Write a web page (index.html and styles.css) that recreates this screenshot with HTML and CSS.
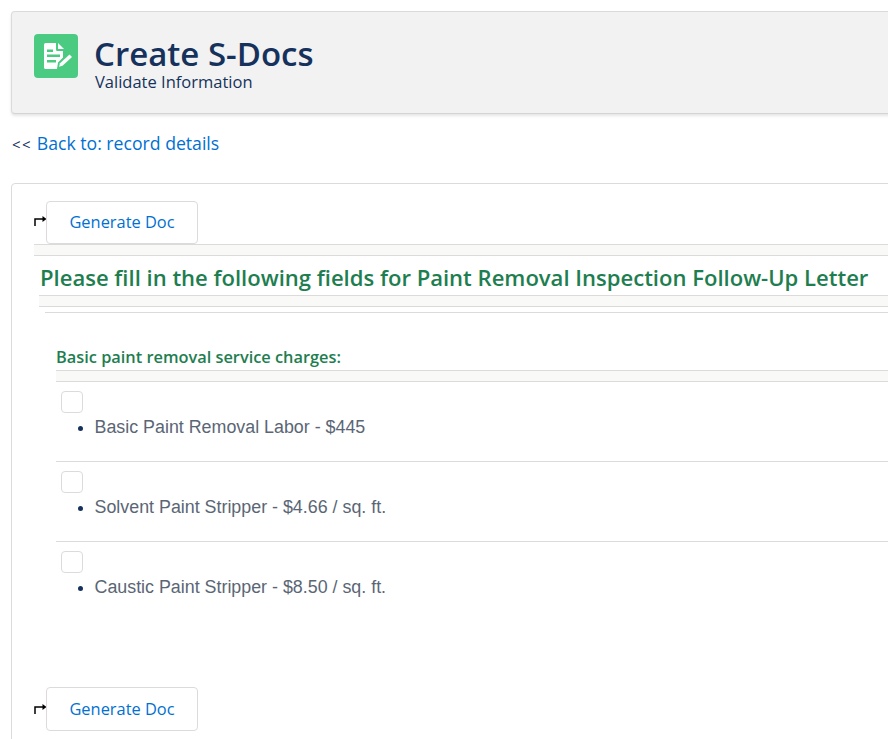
FILE: index.html
```html
<!DOCTYPE html>
<html lang="en">
<head>
<meta charset="utf-8">
<title>Create S-Docs</title>
<link rel="stylesheet" href="styles.css">
</head>
<body>
<div class="page">
  <header class="page-header">
    <div class="app-icon">
      <svg width="44" height="44" viewBox="0 0 44 44">
        <path fill="#fff" d="M11.500 9H22v6.500c0 1 .8 1.500 1.500 1.500H29v6.500l-5 5-1 6.500H11.500c-.8 0-1.500-.7-1.500-1.500v-22.500C10 9.700 10.700 9 11.500 9z"/>
        <path fill="#fff" d="M24 9l6 6h-6z"/>
        <path fill="#4bca81" d="M13 15.500h6v2.500h-6zM13 20.500h13v2.500H13zM13 26h9v2.500h-9z"/>
        <path fill="#fff" d="M35.500 20.500 38 23l-9.500 8.800-3.500 1 1-3.500z"/>
      </svg>
    </div>
    <div class="titles">
      <h1 class="title">Create S-Docs</h1>
      <div class="subtitle">Validate Information</div>
    </div>
  </header>

  <p class="back"><span class="chev">&lt;&lt;</span> <a href="#">Back to: record details</a></p>

  <section class="card">
    <div class="action top">
      <svg class="arrow" width="13" height="10" viewBox="0 0 13 10"><path d="M1 10V3h8" fill="none" stroke="#000" stroke-width="1.500"/><path d="M8.500 0 12.500 3 8.500 6z"/></svg>
      <button class="btn" type="button">Generate Doc</button>
    </div>
    <div class="band"></div>
    <h2 class="form-title">Please fill in the following fields for Paint Removal Inspection Follow-Up Letter</h2>
    <div class="band second"></div>
    <div class="rule"></div>

    <div class="section">
      <h3 class="section-title">Basic paint removal service charges:</h3>
      <div class="band"></div>
      <div class="item">
        <span class="check"></span>
        <ul><li><span class="label">Basic Paint Removal Labor - $445</span></li></ul>
      </div>
      <div class="item">
        <span class="check"></span>
        <ul><li><span class="label">Solvent Paint Stripper - $4.66 / sq. ft.</span></li></ul>
      </div>
      <div class="item last">
        <span class="check"></span>
        <ul><li><span class="label">Caustic Paint Stripper - $8.50 / sq. ft.</span></li></ul>
      </div>
    </div>

    <div class="action bottom">
      <svg class="arrow" width="13" height="10" viewBox="0 0 13 10"><path d="M1 10V3h8" fill="none" stroke="#000" stroke-width="1.500"/><path d="M8.500 0 12.500 3 8.500 6z"/></svg>
      <button class="btn" type="button">Generate Doc</button>
    </div>
  </section>
</div>
</body>
</html>
```
FILE: styles.css
```css
html, body { margin: 0; padding: 0; background: #fff; }
body { overflow: hidden; height: 739px; font-family: "Open Sans", "Noto Sans", sans-serif; color: #16325c; }
.page { width: 1000px; height: 728px; overflow: hidden; padding: 11px 0 0 11px; }
.page-header {
  display: flex; align-items: flex-start; gap: 17px; padding: 22px 0 0 22px; height: 79px;
  background: #f2f2f2; border: 1px solid #dddbda; border-bottom-color: #d4d4d4; border-radius: 4px;
  box-shadow: 0 2px 3px rgba(0,0,0,.1);
}
.app-icon { flex: none; width: 44px; height: 44px; background: #4bca81; border-radius: 4px; }
.app-icon svg { display: block; }
.titles { margin-top: 2px; }
.title { margin: 0 0 0 -1px; font-size: 33px; line-height: 36px; font-weight: 600; color: #16325c; }
.subtitle { font-size: 16.500px; line-height: 20px; color: #16325c; }
.back { margin: 17px 0 0 1px; font-size: 17.650px; line-height: 24px; color: #16325c; }
.chev { font-size: 15px; letter-spacing: 1.500px; }
.back a { color: #0070d2; text-decoration: none; }
.card { margin-top: 27px; background: #fff; border: 1px solid #dddbda; border-radius: 4px; padding: 17px 0 0 22px; height: 600px; box-sizing: border-box; }
.action { display: flex; align-items: center; }
.action.top { height: 43px; }
.action.top .arrow { margin-top: -3px; }
.action.bottom { height: 44px; margin-top: 65px; }
.action.bottom .arrow { margin-top: -1px; }
.arrow { flex: none; }
.btn { box-sizing: border-box; width: 152px; height: 100%; margin-left: -1px; padding: 0 0 2px; background: #fff; border: 1px solid #dddbda; border-radius: 4px; color: #0070d2; font: 16.400px "Open Sans", sans-serif; }
.band { height: 10px; background: #f9f9f7; border-top: 1px solid #dddbda; border-bottom: 1px solid #dddbda; }
.band.second { margin-left: 5px; }
.form-title { margin: 0 0 0 6px; padding-top: 4px; font-size: 22.050px; line-height: 35px; font-weight: 600; color: #1e7e50; white-space: nowrap; }
.rule { margin: 5px 0 0 11px; border-top: 1px solid #dddbda; }
.section { margin: 0 0 0 22px; padding-top: 32px; }
.section-title { margin: 0; padding-bottom: 1px; font-size: 16.350px; line-height: 24px; font-weight: 600; color: #1e7e50; }
.item { box-sizing: border-box; height: 80px; padding: 9px 0 0 5px; border-bottom: 1px solid #dddbda; }
.item.last { border-bottom: 0; }
.check { display: block; width: 22px; height: 22px; box-sizing: border-box; background: #fff; border: 1px solid #dddbda; border-radius: 4px; }
ul { margin: 4px 0 0; padding: 0 0 0 33.500px; font: 17.850px/20px "Liberation Sans", Arial, sans-serif; color: #16325c; }
.label { color: #5a6675; }
```
